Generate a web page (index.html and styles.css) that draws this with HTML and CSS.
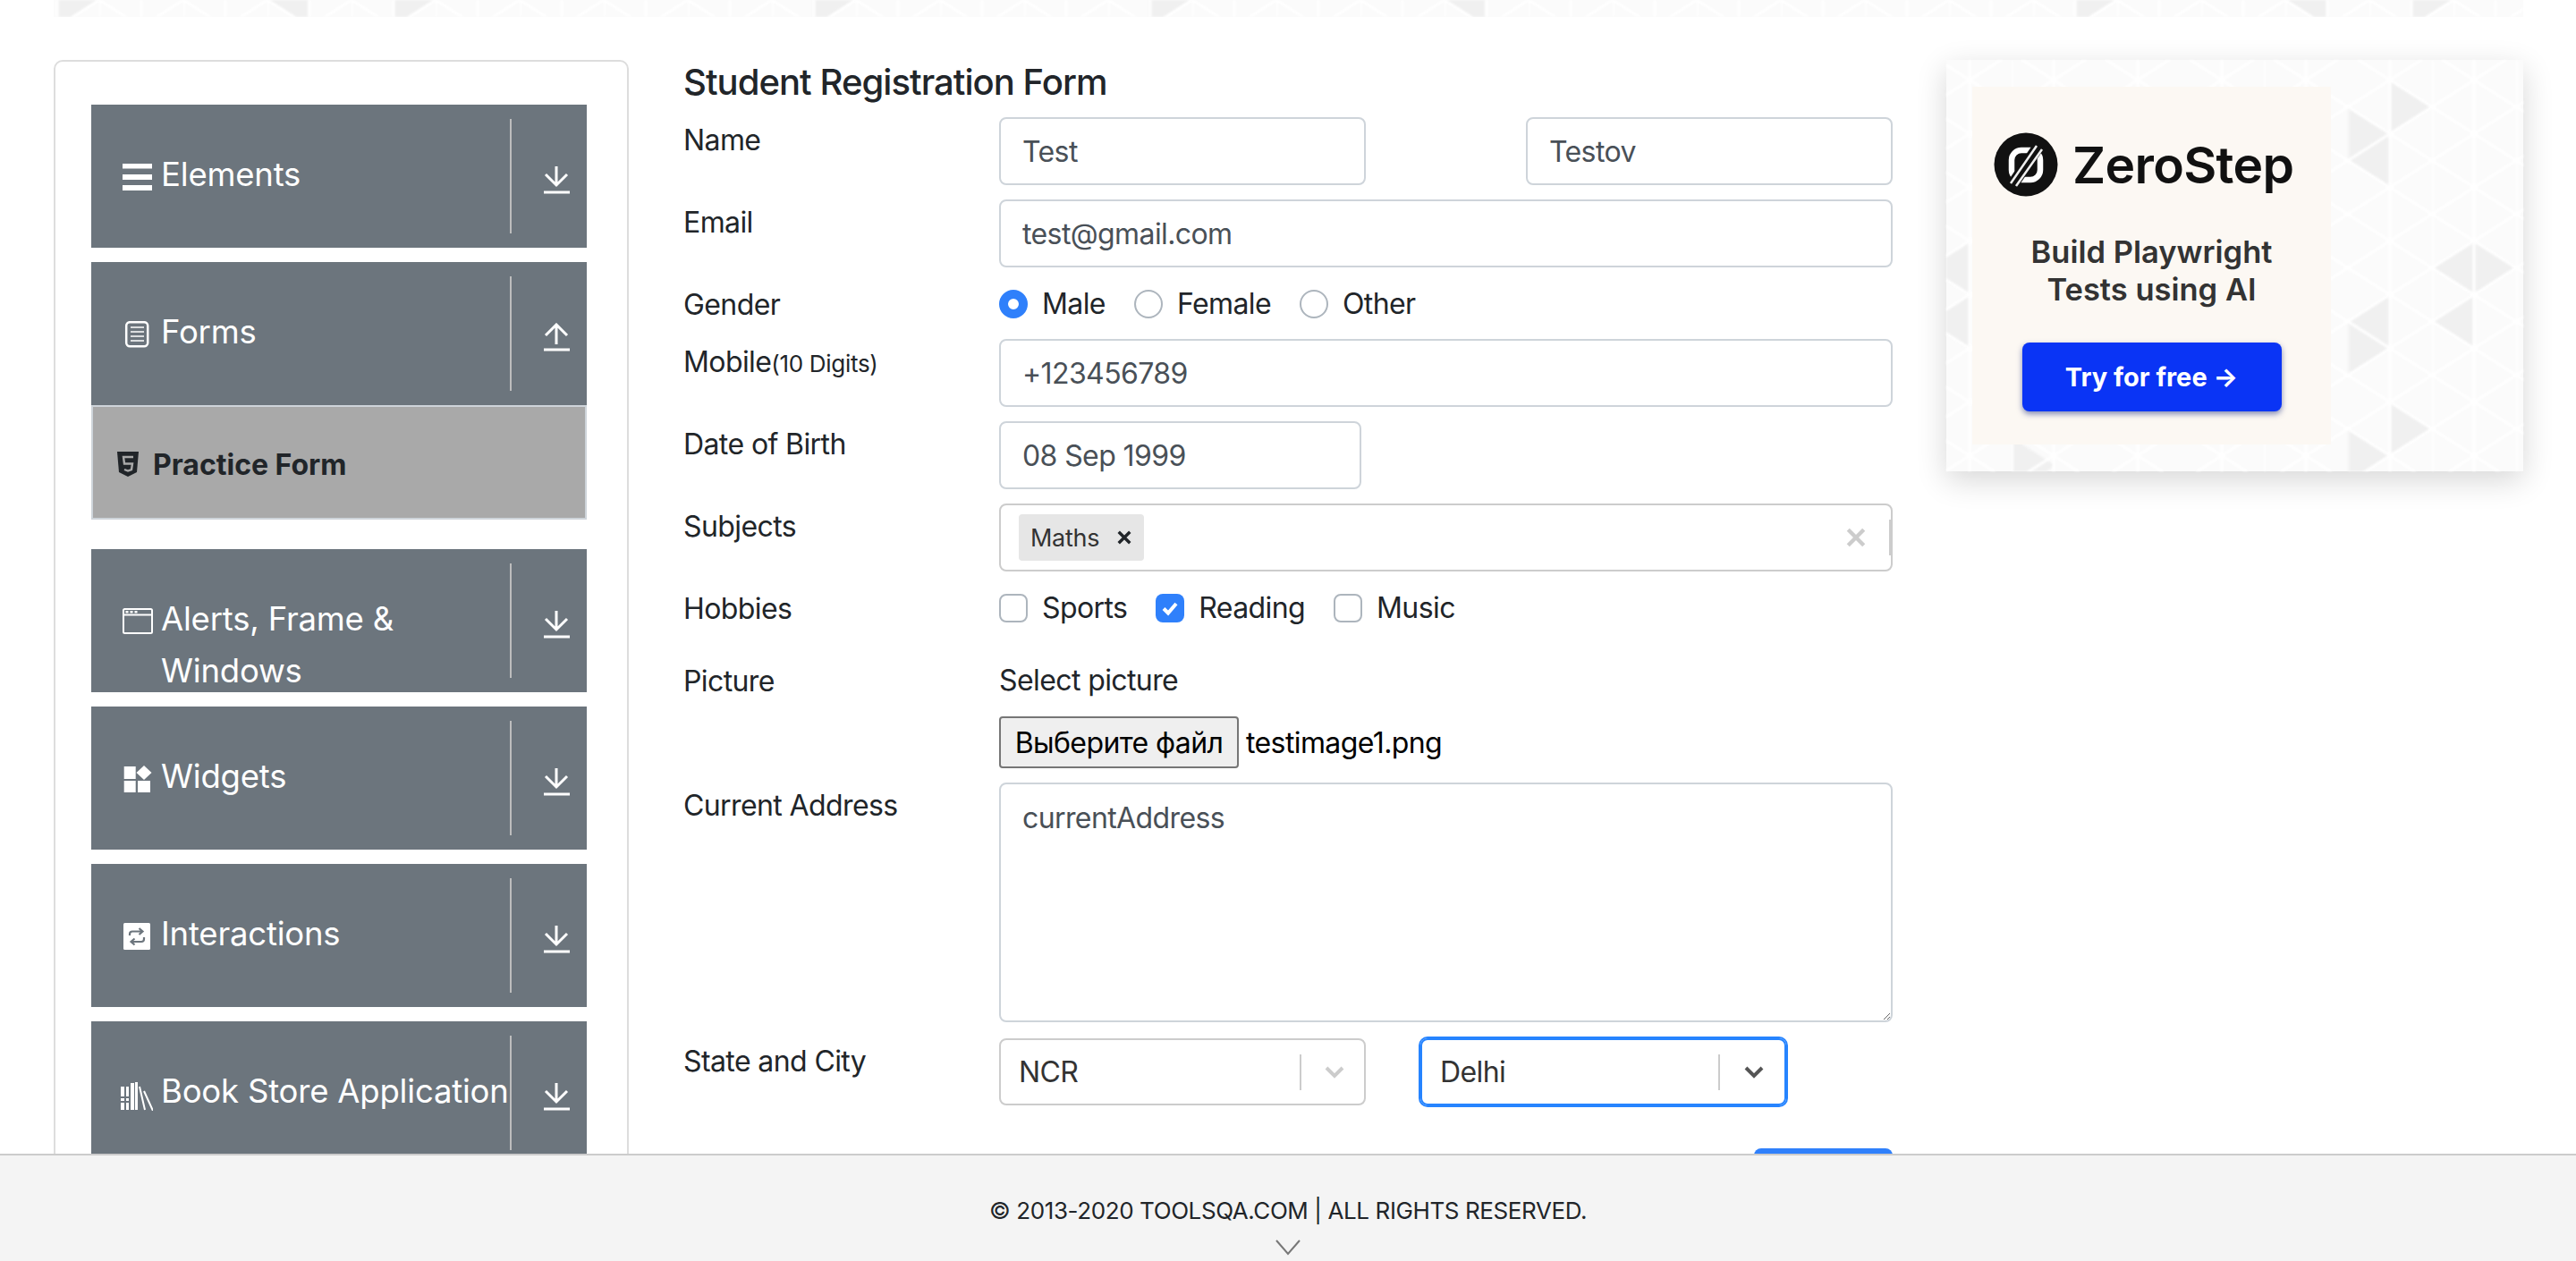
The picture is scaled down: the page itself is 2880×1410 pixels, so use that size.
FILE: index.html
```html
<!DOCTYPE html>
<html>
    <head>
        <meta charset="utf-8">
        <title>Student Registration Form</title>
        <link rel="stylesheet" href="styles.css">
    </head>
    <body>
        <div class="banner">
            <svg class="pattern" width="100%" height="100%">
                <defs>
                    <pattern id="tri-top" width="94" height="60" patternUnits="userSpaceOnUse" patternTransform="translate(51 0)">
                        <path d="M0 0L47 30L94 0M0 60L47 30L94 60M0 0V60M47 0V60" fill="none" stroke="#fff" stroke-width="3"/>
                    </pattern>
                </defs>
                <g fill="#f0f0f0">
                    <path d="M4 30V-30L48 0Z"/>
                    <path d="M284 30V-30L238 0Z"/>
                    <path d="M381 30V-30L425 0Z"/>
                    <path d="M848 30V-30L894 0Z"/>
                    <path d="M1224 30V-30L1270 0Z"/>
                    <path d="M1600 30V-30L1554 0Z"/>
                    <path d="M2261 30V-30L2308 0Z"/>
                    <path d="M2542 30V-30L2495 0Z"/>
                    <path d="M2636 30V-30L2683 0Z"/>
                </g>
                <rect width="100%" height="100%" fill="url(#tri-top)"/>
            </svg>
        </div>

        <div class="page">
            <aside class="sidebar">
                <div class="group">
                    <svg class="group-icon" viewBox="0 0 36 32"><path fill="#fff" d="M2 0h33v5.500H2zM2 12h33v6H2zM2 24h33v6H2z"/></svg>
                    <div class="group-title">Elements</div>
                    <div class="group-line"></div>
                    <svg class="group-arrow" viewBox="0 0 30 32"><path d="M15 1V22M3 10L15 22L27 10M1 30H30" fill="none" stroke="#fff" stroke-width="3"/></svg>
                </div>

                <div class="group group-open">
                    <svg class="group-icon" viewBox="0 0 36 32">
                        <rect x="6.200" y="1.200" width="24" height="27" rx="4" fill="none" stroke="#fff" stroke-width="2.500"/>
                        <path d="M11 7H26M11 12H26M11 17H26M11 22H26" stroke="#fff" stroke-width="1.600"/>
                    </svg>
                    <div class="group-title">Forms</div>
                    <div class="group-line"></div>
                    <svg class="group-arrow" viewBox="0 0 30 32"><path d="M15 2V24M3 14L15 2L27 14M1 30H30" fill="none" stroke="#fff" stroke-width="3"/></svg>
                </div>
                <div class="practice">
                    <svg class="practice-icon" viewBox="0 0 24 28">
                        <path fill="#212529" d="M0 0H24L22 23L12 28L2 23Z"/>
                        <path d="M18 6H7L8 13.500H17L16 20L12 21.500L8 20" fill="none" stroke="#a9a9a9" stroke-width="2.400"/>
                    </svg>
                    <span>Practice Form</span>
                </div>

                <div class="group">
                    <svg class="group-icon" viewBox="0 0 36 32">
                        <rect x="3" y="1" width="32" height="27" rx="1.500" fill="none" stroke="#fff" stroke-width="2"/>
                        <path d="M3 7.500H35" stroke="#fff" stroke-width="2"/>
                        <path d="M5.500 3h3v2.500h-3zM10.500 3h3v2.500h-3zM15.500 3h3v2.500h-3z" fill="#fff"/>
                    </svg>
                    <div class="group-title">Alerts, Frame &amp; Windows</div>
                    <div class="group-line"></div>
                    <svg class="group-arrow" viewBox="0 0 30 32"><path d="M15 1V22M3 10L15 22L27 10M1 30H30" fill="none" stroke="#fff" stroke-width="3"/></svg>
                </div>

                <div class="group">
                    <svg class="group-icon" viewBox="0 0 36 32">
                        <path fill="#fff" d="M3.700 1h13v14h-13zM3.700 17h13v13h-13zM19 17h14v13H19zM26 0l8.500 8l-8.500 8l-8.500-8z"/>
                    </svg>
                    <div class="group-title">Widgets</div>
                    <div class="group-line"></div>
                    <svg class="group-arrow" viewBox="0 0 30 32"><path d="M15 1V22M3 10L15 22L27 10M1 30H30" fill="none" stroke="#fff" stroke-width="3"/></svg>
                </div>

                <div class="group">
                    <svg class="group-icon" viewBox="0 0 36 32">
                        <rect x="3" y="0" width="30" height="30" rx="1.500" fill="#fff"/>
                        <path d="M10 14V12.500A3 3 0 0 1 13 9.500H24M20.500 6L24.500 9.500L20.500 13M26 16V18A3 3 0 0 1 23 21H12M15.500 17.500L11.500 21L15.500 24.500" fill="none" stroke="#6c757d" stroke-width="2.200"/>
                    </svg>
                    <div class="group-title">Interactions</div>
                    <div class="group-line"></div>
                    <svg class="group-arrow" viewBox="0 0 30 32"><path d="M15 1V22M3 10L15 22L27 10M1 30H30" fill="none" stroke="#fff" stroke-width="3"/></svg>
                </div>

                <div class="group">
                    <svg class="group-icon book-icon" viewBox="0 0 36 32">
                        <path fill="#fff" d="M0 5h4v11H0zM0 18h4v3H0zM0 23h4v8H0zM6 5h3v11H6zM6 23h3v8H6zM6 18h3v3H6zM11 1h4v30h-4zM16 0h3v31h-3z"/>
                        <path d="M21 5L27 31M26 10L36 32" fill="none" stroke="#fff" stroke-width="2"/>
                    </svg>
                    <div class="group-title">Book Store Application</div>
                    <div class="group-line"></div>
                    <svg class="group-arrow" viewBox="0 0 30 32"><path d="M15 1V22M3 10L15 22L27 10M1 30H30" fill="none" stroke="#fff" stroke-width="3"/></svg>
                </div>
            </aside>

            <main class="form">
                <h1 class="form-title">Student Registration Form</h1>

                <div class="row">
                    <label class="row-label">Name</label>
                    <div class="name-fields">
                        <input class="field" value="Test">
                        <input class="field" value="Testov">
                    </div>
                </div>

                <div class="row">
                    <label class="row-label">Email</label>
                    <input class="field field-wide" value="test@gmail.com">
                </div>

                <div class="row row-text">
                    <label class="row-label">Gender</label>
                    <div class="options">
                        <span class="option"><span class="radio radio-on"></span>Male</span>
                        <span class="option"><span class="radio"></span>Female</span>
                        <span class="option"><span class="radio"></span>Other</span>
                    </div>
                </div>

                <div class="row">
                    <label class="row-label">Mobile<small>(10 Digits)</small></label>
                    <input class="field field-wide" value="+123456789">
                </div>

                <div class="row">
                    <label class="row-label">Date of Birth</label>
                    <input class="field field-date" value="08 Sep 1999">
                </div>

                <div class="row">
                    <label class="row-label">Subjects</label>
                    <div class="subjects">
                        <span class="chip">Maths<svg class="chip-x" viewBox="0 0 14 14"><path d="M1.500 1.500L12.500 12.500M12.500 1.500L1.500 12.500" stroke="#212529" stroke-width="3"/></svg></span>
                        <svg class="clear-x" viewBox="0 0 22 22"><path d="M3 3L19 19M19 3L3 19" stroke="#ccc" stroke-width="4"/></svg>
                        <span class="subjects-line"></span>
                    </div>
                </div>

                <div class="row row-text">
                    <label class="row-label">Hobbies</label>
                    <div class="options">
                        <span class="option"><span class="check"></span>Sports</span>
                        <span class="option"><span class="check check-on"><svg viewBox="0 0 32 32"><path d="M9 16.500L14 21.500L23 11" fill="none" stroke="#fff" stroke-width="4"/></svg></span>Reading</span>
                        <span class="option"><span class="check"></span>Music</span>
                    </div>
                </div>

                <div class="row row-picture">
                    <label class="row-label">Picture</label>
                    <div class="picture">
                        <div class="picture-title">Select picture</div>
                        <div class="file">
                            <button class="file-button">Выберите файл</button>
                            <span>testimage1.png</span>
                        </div>
                    </div>
                </div>

                <div class="row">
                    <label class="row-label">Current Address</label>
                    <textarea class="field field-wide field-area">currentAddress</textarea>
                </div>

                <div class="row row-state">
                    <label class="row-label">State and City</label>
                    <div class="select select-state">
                        <span class="select-value">NCR</span>
                        <span class="select-line"></span>
                        <svg class="select-arrow" viewBox="0 0 24 16"><path d="M3 3L12 12L21 3" fill="none" stroke="#ccc" stroke-width="4"/></svg>
                    </div>
                    <div class="select select-focus">
                        <span class="select-value">Delhi</span>
                        <span class="select-line"></span>
                        <svg class="select-arrow" viewBox="0 0 24 16"><path d="M3 3L12 12L21 3" fill="none" stroke="#555" stroke-width="4"/></svg>
                    </div>
                </div>

                <div class="submit-row">
                    <button class="submit">Submit</button>
                </div>
            </main>

            <aside class="ad">
                <svg class="pattern ad-pattern" width="645" height="460">
                    <defs>
                        <pattern id="tri-ad" width="94" height="60" patternUnits="userSpaceOnUse" patternTransform="translate(73 52.500)">
                            <path d="M0 0L47 30L94 0M0 60L47 30L94 60M0 0V60M47 0V60" fill="none" stroke="#fff" stroke-width="3"/>
                        </pattern>
                    </defs>
                    <g fill="#f0f0f0" transform="translate(-2176 -66.500)">
                        <path d="M2672 89V149L2719 119Z"/>
                        <path d="M2625 119V179L2672 149Z"/>
                        <path d="M2672 149V209L2625 179Z"/>
                        <path d="M2766 268V328L2813 298Z"/>
                        <path d="M2766 268V328L2719 298Z"/>
                        <path d="M2672 328V388L2625 358Z"/>
                        <path d="M2766 328V388L2719 358Z"/>
                        <path d="M2625 358V418L2672 388Z"/>
                        <path d="M2672 448V508L2719 478Z"/>
                        <path d="M2625 478V538L2672 508Z"/>
                        <path d="M2251 490V550L2298 520Z"/>
                        <path d="M2201 270V330L2154 300Z"/>
                        <path d="M2201 330V390L2154 360Z"/>
                    </g>
                    <rect width="645" height="460" fill="url(#tri-ad)"/>
                </svg>
                <div class="ad-panel">
                    <div class="ad-logo">
                        <svg class="ad-mark" viewBox="0 0 72 72">
                            <circle cx="36" cy="36" r="35.500" fill="#111"/>
                            <rect x="20" y="20" width="32" height="33" rx="11" fill="none" stroke="#fff" stroke-width="6.500"/>
                            <path d="M20 60L52 13" stroke="#111" stroke-width="13"/>
                            <path d="M19 57L48 15M25 60L54 19" stroke="#eee" stroke-width="2.500"/>
                        </svg>
                        <span class="ad-name">ZeroStep</span>
                    </div>
                    <div class="ad-text">Build Playwright<br>Tests using AI</div>
                    <div class="ad-button">Try for free →</div>
                </div>
            </aside>
        </div>

        <footer class="footer">
            <span class="footer-text">© 2013-2020 TOOLSQA.COM | ALL RIGHTS RESERVED.</span>
            <svg class="footer-arrow" viewBox="0 0 28 18"><path d="M1 1L14 16L27 1" fill="none" stroke="#777" stroke-width="2"/></svg>
        </footer>
    </body>
</html>
```

FILE: styles.css
```css
html, body {
    margin: 0;
    height: 100%;
    overflow: hidden;
    background: #fff;
}

body {
    font-family: Inter, "Liberation Sans", sans-serif;
    font-size: 32px;
    letter-spacing: -0.6px;
    color: #212529;
}

/* top banner */
.banner {
    height: 19px;
    margin: 0 59px 0 60px;
    background: #fbfbfb;
    overflow: hidden;
}

.pattern {
    display: block;
    filter: blur(1.2px);
}

.page {
    display: flex;
    align-items: flex-start;
    padding: 48px 59px 0 60px;
}

/* sidebar */
.sidebar {
    flex: none;
    box-sizing: border-box;
    width: 643px;
    height: 1400px;
    margin-right: 61px;
    padding: 48px 45px 0 40px;
    border: 2px solid #ddd;
    border-radius: 10px;
}

.group {
    display: flex;
    align-items: flex-start;
    box-sizing: border-box;
    height: 160px;
    margin-bottom: 16px;
    padding-left: 33px;
    background: #6c757d;
    overflow: hidden;
    color: #fff;
}

.group-open {
    margin-bottom: 0;
}

.group-icon {
    flex: none;
    width: 36px;
    height: 32px;
    margin: 66px 9px 0 0;
}

.book-icon {
    margin-top: 68px;
}

.group-title {
    flex: none;
    width: 390px;
    padding-top: 49px;
    font-size: 36.500px;
    letter-spacing: -0.200px;
    line-height: 58px;
}

.group-line {
    flex: none;
    width: 2px;
    height: 128px;
    margin-top: 16px;
    background: #bdbdbd;
}

.group-arrow {
    flex: none;
    width: 30px;
    height: 32px;
    margin: 68px 0 0 35px;
}

.practice {
    display: flex;
    align-items: center;
    box-sizing: border-box;
    height: 128px;
    margin-bottom: 33px;
    padding: 4px 0 0 27px;
    border: 2px solid #ced4da;
    background: #a9a9a9;
    font-size: 32px;
    font-weight: 700;
    letter-spacing: 0;
}

.practice-icon {
    flex: none;
    width: 24px;
    height: 28px;
    margin-right: 16px;
}

/* form */
.form {
    flex: none;
    width: 1352px;
    margin-right: 60px;
}

.form-title {
    height: 64px;
    margin: 0;
    font-size: 40px;
    font-weight: 500;
    letter-spacing: -0.950px;
    line-height: 50px;
}

.row {
    display: flex;
    align-items: flex-start;
    margin-bottom: 16px;
}

.row-text {
    height: 48px;
}

.row-label {
    flex: none;
    width: 353px;
    padding-top: 2px;
    line-height: 48px;
}

.row-label small {
    font-size: 26px;
    letter-spacing: -0.300px;
}

.name-fields {
    display: flex;
    justify-content: space-between;
    width: 999px;
}

.field {
    display: block;
    box-sizing: border-box;
    width: 410px;
    height: 76px;
    padding: 0 24px;
    border: 2px solid #ced4da;
    border-radius: 8px;
    outline: none;
    font: inherit;
    letter-spacing: inherit;
    color: #495057;
}

.field-wide {
    width: 999px;
}

.field-date {
    width: 405px;
}

.field-area {
    height: 268px;
    padding: 14px 24px;
    line-height: 48px;
    resize: both;
}

.options {
    display: flex;
    gap: 32px;
    padding-top: 1px;
    line-height: 48px;
}

.option {
    display: flex;
    align-items: center;
    gap: 16px;
}

.radio, .check {
    flex: none;
    box-sizing: border-box;
    width: 32px;
    height: 32px;
    border: 2px solid #adb5bd;
    background: #fff;
}

.radio {
    border-radius: 50%;
}

.radio-on {
    border: 10px solid #2f80fb;
}

.check {
    border-radius: 8px;
}

.check svg {
    display: block;
    width: 32px;
    height: 32px;
    margin: -1px;
}

.check-on {
    border: 0;
    background: #2f80fb;
}

.check-on svg {
    margin: 0;
}

.subjects {
    display: flex;
    align-items: center;
    box-sizing: border-box;
    width: 999px;
    height: 76px;
    padding: 0 0 0 20px;
    border: 2px solid #ccc;
    border-radius: 8px;
}

.chip {
    display: flex;
    align-items: center;
    box-sizing: border-box;
    width: 140px;
    height: 52px;
    padding-left: 13px;
    border-radius: 4px;
    background: #e6e6e6;
    font-size: 27px;
    letter-spacing: -0.300px;
    color: #333;
}

.chip-x {
    width: 16px;
    height: 16px;
    margin-left: auto;
    margin-right: 14px;
}

.clear-x {
    width: 24px;
    height: 24px;
    margin-left: auto;
}

.subjects-line {
    width: 2px;
    height: 40px;
    margin-left: 25px;
    background: #ccc;
}

.row-picture {
    margin-top: 33px;
}

.picture-title {
    padding-top: 1px;
    line-height: 48px;
}

.file {
    display: flex;
    align-items: center;
    gap: 8px;
    margin-top: 16px;
    color: #000;
}

.file-button {
    box-sizing: border-box;
    width: 268px;
    height: 58px;
    padding: 0;
    border: 2px solid #767676;
    border-radius: 4px;
    background: #efefef;
    font: inherit;
    letter-spacing: inherit;
    color: #000;
}

.row-state {
    margin-top: 18px;
}

.select {
    display: flex;
    align-items: center;
    box-sizing: border-box;
    width: 410px;
    height: 75px;
    padding-left: 20px;
    border: 2px solid #ccc;
    border-radius: 8px;
    color: #333;
}

.select-focus {
    width: 409px;
    margin-left: 61px;
    border-color: #2684ff;
    box-shadow: 0 0 0 2px #2684ff;
}

.select-value {
    flex: 1;
}

.select-line {
    width: 2px;
    height: 40px;
    background: #ccc;
}

.select-arrow {
    width: 24px;
    height: 16px;
    margin: 0 21px 0 25px;
}

.select-focus .select-arrow {
    margin: 0 22px 0 26px;
}

.submit-row {
    display: flex;
    justify-content: flex-end;
    margin-top: 48px;
}

.submit {
    width: 155px;
    height: 76px;
    border: 0;
    border-radius: 8px;
    background: #2f80fb;
    font: inherit;
    color: #fff;
}

/* ad */
.ad {
    position: relative;
    flex: none;
    width: 645px;
    height: 460px;
    background: #fbfbfb;
    box-shadow: 0 10px 32px rgba(0, 0, 0, 0.16);
    letter-spacing: 0;
}

.ad-pattern {
    position: absolute;
    top: 0;
    left: 0;
}

.ad-panel {
    position: absolute;
    top: 30px;
    left: 29px;
    display: flex;
    flex-direction: column;
    align-items: center;
    box-sizing: border-box;
    width: 401px;
    height: 400px;
    padding-top: 51px;
    background: #fcf8f3;
}

.ad-logo {
    display: flex;
    align-items: center;
    gap: 16px;
    align-self: flex-start;
    height: 72px;
    margin-left: 24px;
}

.ad-mark {
    flex: none;
    width: 72px;
    height: 72px;
}

.ad-name {
    font-size: 57px;
    font-weight: 600;
    letter-spacing: -0.700px;
    color: #111;
}

.ad-text {
    margin-top: 41px;
    font-size: 34.500px;
    font-weight: 600;
    line-height: 42px;
    text-align: center;
    color: #333;
}

.ad-button {
    display: flex;
    align-items: center;
    justify-content: center;
    width: 290px;
    height: 77px;
    margin-top: 38px;
    border-radius: 8px;
    background: #0a34f5;
    box-shadow: 0 3px 6px rgba(10, 30, 120, 0.5);
    font-size: 29px;
    font-weight: 700;
    color: #fff;
}

/* footer stays over the page */
.footer {
    position: fixed;
    left: 0;
    right: 0;
    bottom: 0;
    box-sizing: border-box;
    height: 120px;
    border-top: 2px solid #ccc;
    background: #f4f4f4;
    display: flex;
    flex-direction: column;
    align-items: center;
    padding-top: 46px;
}

.footer-text {
    font-size: 26px;
    letter-spacing: -0.400px;
    line-height: 32px;
}

.footer-arrow {
    width: 28px;
    height: 18px;
    margin-top: 16px;
}
```
